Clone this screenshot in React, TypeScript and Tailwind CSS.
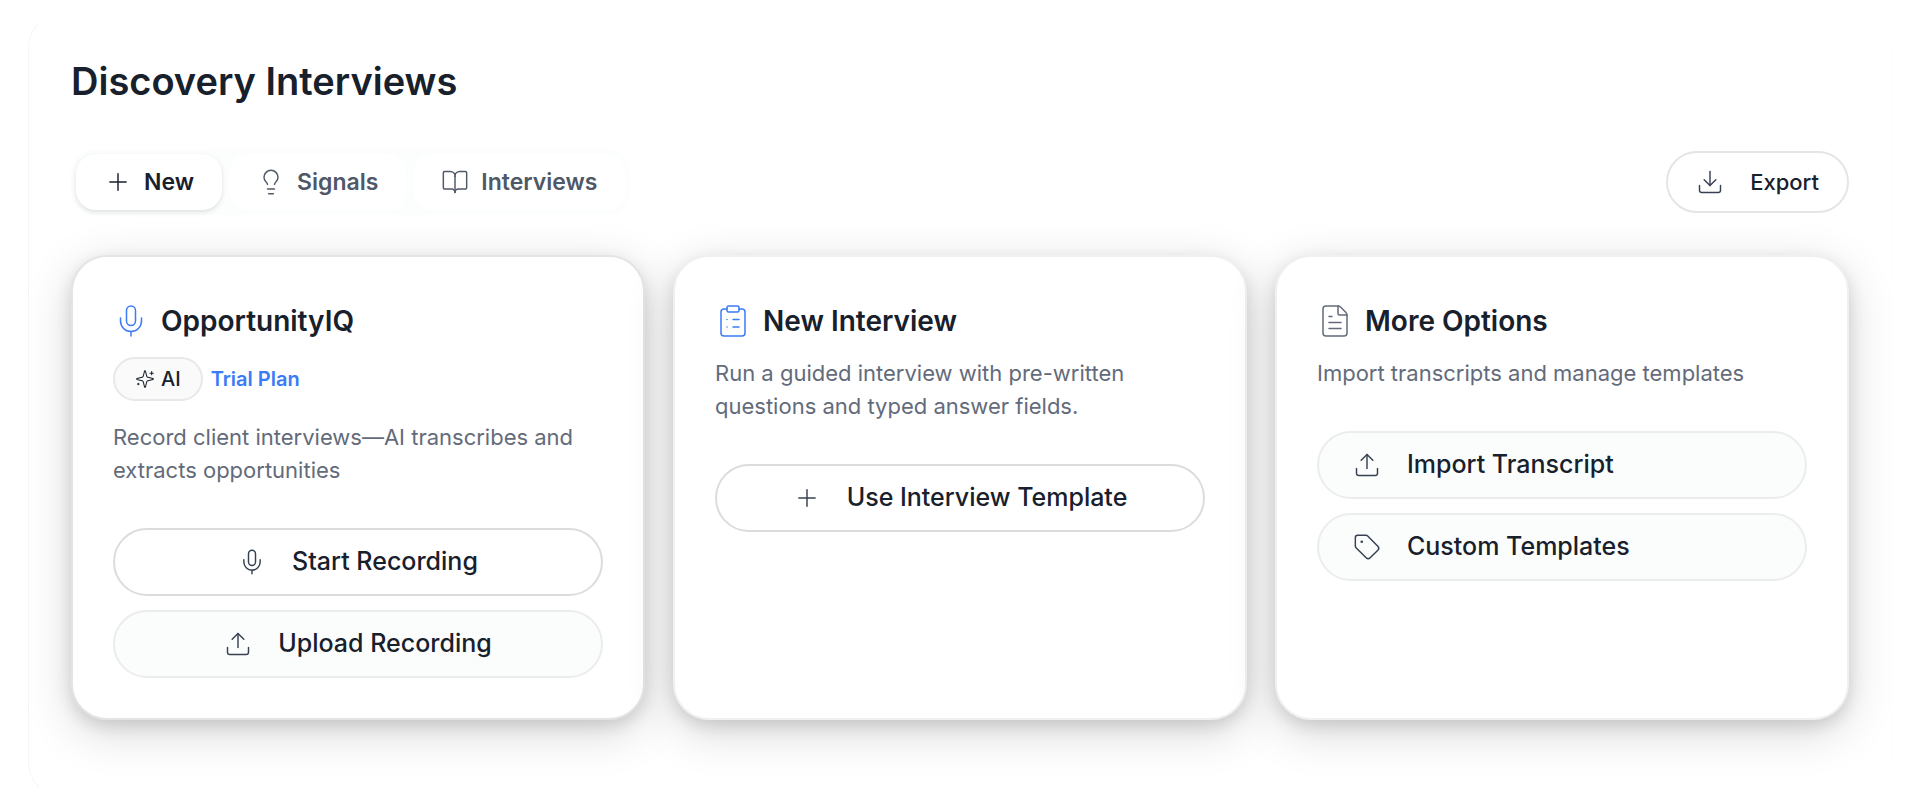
import { useState } from "react";
import type { ReactNode } from "react";
import {
  BookOpen,
  ClipboardList,
  Download,
  FileText,
  Lightbulb,
  Mic,
  Plus,
  Tag,
  Upload,
} from "lucide-react";
import type { LucideIcon } from "lucide-react";
import clsx from "clsx";

const tabs = [
  { name: "New", icon: Plus },
  { name: "Signals", icon: Lightbulb },
  { name: "Interviews", icon: BookOpen },
];

function SparklesIcon({ className }: { className?: string }) {
  return (
    <svg
      viewBox="0 0 24 24"
      fill="none"
      stroke="currentColor"
      strokeWidth={1.25}
      strokeLinecap="round"
      strokeLinejoin="round"
      className={className}
      aria-hidden="true"
    >
      <path d="M9.937 15.5A2 2 0 0 0 8.5 14.063l-6.135-1.582a.5.5 0 0 1 0-.962L8.5 9.936A2 2 0 0 0 9.937 8.5l1.582-6.135a.5.5 0 0 1 .963 0L14.063 8.5A2 2 0 0 0 15.5 9.937l6.135 1.581a.5.5 0 0 1 0 .964L15.5 14.063a2 2 0 0 0-1.437 1.437l-1.582 6.135a.5.5 0 0 1-.963 0z" />
      <path d="M20 3v4M22 5h-4M4 17v2M5 18H3" />
    </svg>
  );
}

type CardProps = {
  title: string;
  icon: LucideIcon;
  iconClass: string;
  description: string;
  badge?: ReactNode;
  className?: string;
  children: ReactNode;
};

function Card({
  title,
  icon: Icon,
  iconClass,
  description,
  badge,
  className,
  children,
}: CardProps) {
  return (
    <section
      className={clsx(
        "flex flex-col rounded-[36px] border-2 bg-white p-10 shadow-[0_12px_48px_rgba(0,0,0,0.16),0_6px_16px_rgba(0,0,0,0.12)]",
        className ?? "border-[#f0f0f0]"
      )}
    >
      <div className="flex h-12 items-center gap-3">
        <Icon
          className={clsx("size-9 flex-none", iconClass)}
          strokeWidth={1}
          aria-hidden="true"
        />
        <h2 className="text-[28px] font-semibold text-[#18202c]">{title}</h2>
      </div>
      {badge}
      <p
        className={clsx(
          "text-[22px] leading-[33px] text-[#636b7a]",
          badge ? "mt-5" : "mt-3"
        )}
      >
        {description}
      </p>
      <div className="mt-[41px] flex flex-col gap-[14px]">{children}</div>
    </section>
  );
}

type ActionButtonProps = {
  icon: LucideIcon;
  label: string;
  muted?: boolean;
  align?: "center" | "start";
};

function ActionButton({
  icon: Icon,
  label,
  muted,
  align = "center",
}: ActionButtonProps) {
  return (
    <button
      type="button"
      className={clsx(
        "flex h-[68px] w-full items-center gap-[26px] rounded-full border-2 px-[34px] text-[25px] font-medium text-[#18202c]",
        muted ? "border-[#ebecec] bg-[#fbfdfc]" : "border-[#dcdcdc] bg-white",
        align === "center" ? "justify-center" : "justify-start"
      )}
    >
      <Icon
        className="size-7 flex-none text-[#374151]"
        strokeWidth={1.25}
        aria-hidden="true"
      />
      {label}
    </button>
  );
}

export default function App() {
  const [active, setActive] = useState("New");

  return (
    <div className="bg-white px-7 py-3 font-[Inter,sans-serif]">
      <main className="overflow-hidden rounded-[36px] border border-[#fdfdfd] border-l-[#f4f5f5] bg-white px-[42px] pt-10 pb-[77px]">
        <h1 className="text-[38px] leading-[56px] font-semibold text-[#18202c]">
          Discovery Interviews
        </h1>

        <div className="mt-10 flex items-center justify-between">
          <div
            role="tablist"
            className="flex gap-[7px] rounded-3xl bg-[#fcfdfd] p-[5px]"
          >
            {tabs.map((tab) => (
              <button
                key={tab.name}
                type="button"
                role="tab"
                aria-selected={active === tab.name}
                onClick={() => setActive(tab.name)}
                className={clsx(
                  "flex h-14 items-center gap-3 rounded-[20px] bg-white px-7 text-[23px] font-semibold",
                  active === tab.name
                    ? "text-[#18202c] shadow-[0_2px_5px_rgba(0,0,0,0.12)]"
                    : "text-[#4f5866]"
                )}
              >
                <tab.icon
                  className="size-7 flex-none"
                  strokeWidth={1.25}
                  aria-hidden="true"
                />
                {tab.name}
              </button>
            ))}
          </div>
          <button
            type="button"
            className="flex h-[62px] items-center gap-[26px] rounded-full border-2 border-[#e5e5e5] bg-white px-7 text-[22px] font-medium text-[#18202c]"
          >
            <Download
              className="size-7 flex-none text-[#374151]"
              strokeWidth={1.25}
              aria-hidden="true"
            />
            Export
          </button>
        </div>

        <div className="mt-10 grid grid-cols-3 gap-7">
          <Card
            title="OpportunityIQ"
            icon={Mic}
            iconClass="text-[#3b7bf6]"
            description="Record client interviews—AI transcribes and extracts opportunities"
            className="border-[#e4e4e4]"
            badge={
              <div className="mt-3 flex items-center gap-2">
                <span className="flex h-11 items-center gap-[6px] rounded-full border-2 border-[#e8e8e8] bg-[#fafafa] px-5 text-[20px] font-medium text-[#18202c]">
                  <SparklesIcon className="size-5" />
                  AI
                </span>
                <a
                  href="#plan"
                  className="text-[20px] font-semibold text-[#3b7bf6]"
                >
                  Trial Plan
                </a>
              </div>
            }
          >
            <ActionButton icon={Mic} label="Start Recording" />
            <ActionButton icon={Upload} label="Upload Recording" muted />
          </Card>

          <Card
            title="New Interview"
            icon={ClipboardList}
            iconClass="text-[#3b7bf6]"
            description="Run a guided interview with pre-written questions and typed answer fields."
          >
            <ActionButton icon={Plus} label="Use Interview Template" />
          </Card>

          <Card
            title="More Options"
            icon={FileText}
            iconClass="text-[#636b7a]"
            description="Import transcripts and manage templates"
          >
            <ActionButton
              icon={Upload}
              label="Import Transcript"
              muted
              align="start"
            />
            <ActionButton
              icon={Tag}
              label="Custom Templates"
              muted
              align="start"
            />
          </Card>
        </div>
      </main>
    </div>
  );
}
